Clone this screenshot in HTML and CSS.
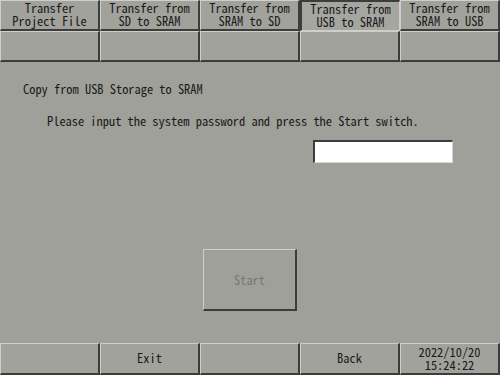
FILE: index.html
```html
<!DOCTYPE html>
<html>
<head>
    <title>Transfer</title>
    <link rel="stylesheet" href="styles.css">
</head>
<body>
    <div class="screen">
        <div class="tabs">
            <div class="cell"><span class="txt">Transfer<br>Project File</span></div>
            <div class="cell"><span class="txt">Transfer from<br>SD to SRAM</span></div>
            <div class="cell"><span class="txt">Transfer from<br>SRAM to SD</span></div>
            <div class="cell active"><span class="txt">Transfer from<br>USB to SRAM</span></div>
            <div class="cell"><span class="txt">Transfer from<br>SRAM to USB</span></div>
            <div class="cell"></div>
            <div class="cell"></div>
            <div class="cell"></div>
            <div class="cell"></div>
            <div class="cell"></div>
        </div>

        <div class="content">
            <p class="title"><span class="txt">Copy from USB Storage to SRAM</span></p>
            <p class="msg"><span class="txt">Please input the system password and press the Start switch.</span></p>
            <div class="pw-row">
                <div class="pw-box"></div>
            </div>
            <div class="start-row">
                <div class="start-btn"><span class="txt">Start</span></div>
            </div>
        </div>

        <div class="footer">
            <div class="cell"></div>
            <div class="cell"><span class="txt">Exit</span></div>
            <div class="cell"></div>
            <div class="cell"><span class="txt">Back</span></div>
            <div class="cell"><span class="txt">2022/10/20<br>15:24:22</span></div>
        </div>
    </div>
</body>
</html>
```

FILE: styles.css
```css
body {
    margin: 0;
    background: #a0a09a;
    font-family: "Noto Sans Mono CJK JP", "Liberation Mono", monospace;
    font-size: 12.4px;
    color: #1a1a1a;
}
.screen {
    width: 500px;
    height: 375px;
    display: flex;
    flex-direction: column;
}
.tabs {
    display: grid;
    grid-template-columns: repeat(5, 100px);
    grid-auto-rows: 31px;
}
.footer {
    display: grid;
    grid-template-columns: repeat(5, 100px);
    height: 32px;
    margin-top: auto;
}
.cell {
    box-sizing: border-box;
    border-style: solid;
    border-width: 1px 2px 2px 1px;
    border-color: #cfcfc7 #3c3c3c #3c3c3c #cfcfc7;
    background: #a2a29c;
    display: flex;
    align-items: center;
    justify-content: center;
    text-align: center;
    line-height: 13px;
}
.cell.active {
    border-width: 2px 1px 1px 2px;
    border-color: #3c3c3c #cfcfc7 #cfcfc7 #3c3c3c;
    background: #a6a6a0;
}
.content {
    flex: 1;
    display: flex;
    flex-direction: column;
}
.title {
    margin: 20px 0 0 23px;
    line-height: 14px;
}
.msg {
    margin: 18px 0 0 47px;
    line-height: 14px;
}
.pw-row {
    display: flex;
    justify-content: flex-end;
    padding-right: 47px;
    margin-top: 12px;
}
.pw-box {
    box-sizing: border-box;
    width: 140px;
    height: 23px;
    background: #fff;
    border-style: solid;
    border-width: 2px 1px 1px 2px;
    border-color: #3c3c3c #d8d8d0 #d8d8d0 #3c3c3c;
}
.start-row {
    display: flex;
    justify-content: center;
    margin-top: 86px;
}
.start-btn {
    box-sizing: border-box;
    width: 94px;
    height: 62px;
    border-style: solid;
    border-width: 1px 2px 2px 1px;
    border-color: #cfcfc7 #3c3c3c #3c3c3c #cfcfc7;
    display: flex;
    align-items: center;
    justify-content: center;
    color: #787872;
}
```
